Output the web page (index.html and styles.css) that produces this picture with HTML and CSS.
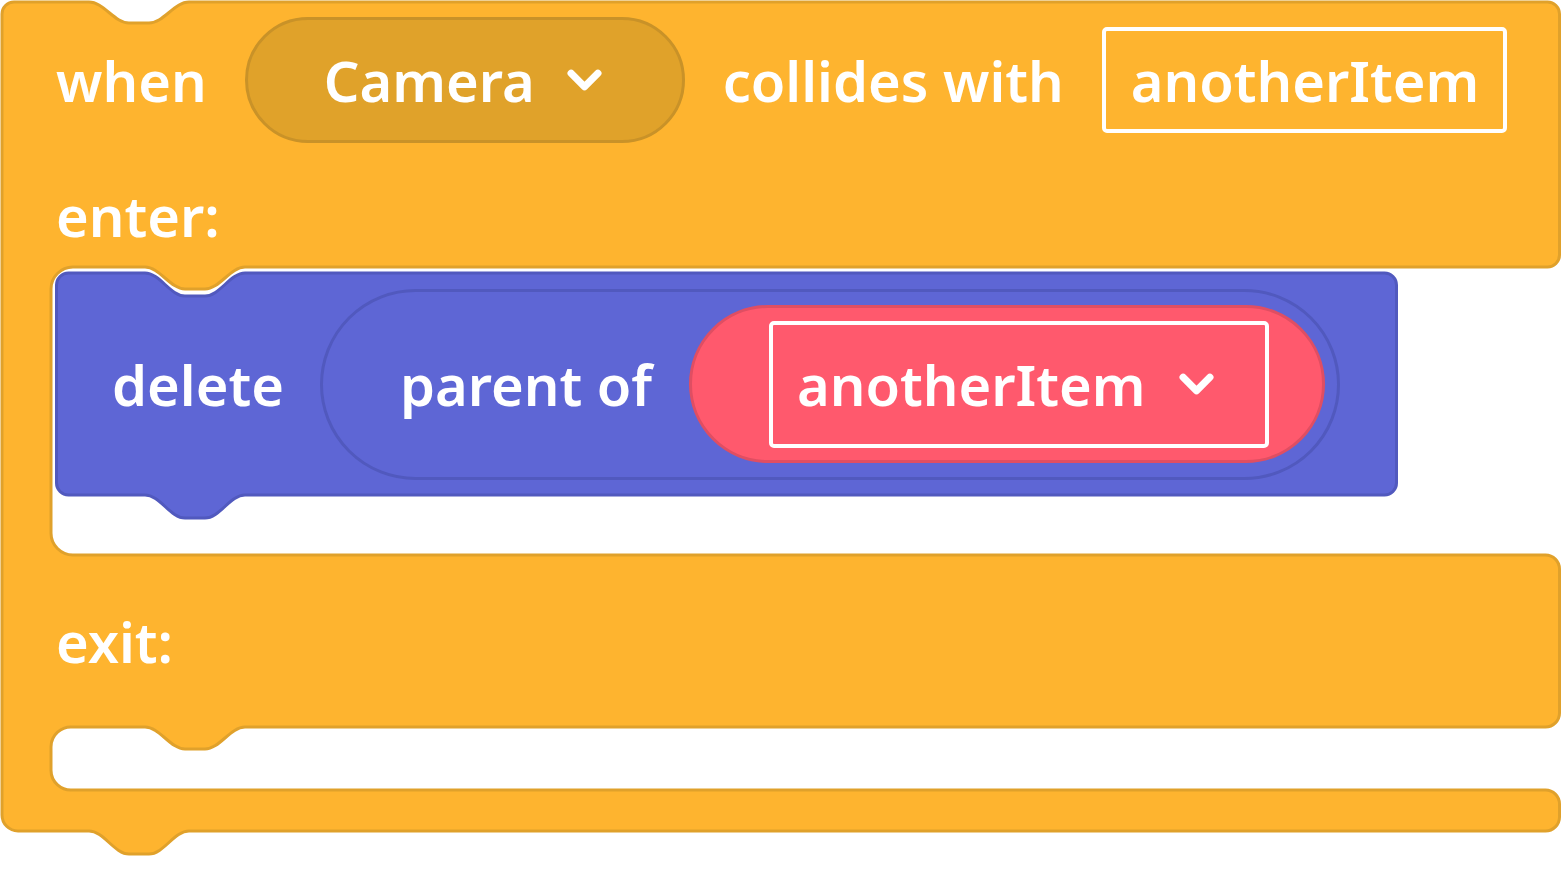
FILE: index.html
```html
<!DOCTYPE html>
<html lang="en">
<head>
    <meta charset="UTF-8">
    <meta name="viewport" content="width=device-width, initial-scale=1.0">
    <title>Collision event block</title>
    <link rel="stylesheet" href="styles.css">
</head>
<body>

    <div class="workspace">
        <!-- block outlines, drawn like the editor does -->
        <svg class="block-shapes" width="1563" height="889" viewBox="0 0 1563 889">
            <path class="shape-event" d="M 2,14 a 12,12 0 0 1 12,-12 H 89
                c 14.6,0 25.4,21 40,21 h 20 c 14.6,0 25.4,-21 40,-21
                H 1547.5 a 12,12 0 0 1 12,12 V 255 a 12,12 0 0 1 -12,12 H 245
                c -14.6,0 -25.4,22 -40,22 h -20 c -14.6,0 -25.4,-22 -40,-22
                H 73 a 22,22 0 0 0 -22,22 V 533 a 22,22 0 0 0 22,22 H 1545.5 a 14,14 0 0 1 14,14 V 713 a 14,14 0 0 1 -14,14 H 245
                c -14.6,0 -25.4,22 -40,22 h -20 c -14.6,0 -25.4,-22 -40,-22
                H 73 a 20,20 0 0 0 -22,20 V 770 a 20,20 0 0 0 22,20 H 1545.5 a 14,14 0 0 1 14,14 V 817 a 14,14 0 0 1 -14,14 H 189
                c -14.6,0 -25.4,23 -40,23 h -20 c -14.6,0 -25.4,-23 -40,-23
                H 18 a 16,16 0 0 1 -16,-16 Z"/>
            <path class="shape-delete" d="M 56.5,285 a 12,12 0 0 1 12,-12 H 145
                c 14.6,0 25.4,23 40,23 h 20 c 14.6,0 25.4,-23 40,-23
                H 1384.5 a 12,12 0 0 1 12,12 V 483 a 12,12 0 0 1 -12,12 H 245
                c -14.6,0 -25.4,23 -40,23 h -20 c -14.6,0 -25.4,-23 -40,-23
                H 68.5 a 12,12 0 0 1 -12,-12 Z"/>
        </svg>

        <div class="block-content">
            <div class="row row-when">
                <span class="label">when</span>
                <div class="dropdown dropdown-camera">
                    <span>Camera</span>
                    <svg class="chevron" viewBox="0 0 34 22"><polyline points="4,4 17,17 30,4"/></svg>
                </div>
                <span class="label">collides with</span>
                <div class="text-field">anotherItem</div>
            </div>

            <div class="section section-enter"><span class="label">enter:</span></div>

            <div class="slot">
                <div class="row row-delete">
                    <span class="label">delete</span>
                    <div class="reporter reporter-parent">
                        <span class="label">parent of</span>
                        <div class="reporter reporter-item">
                            <div class="text-field field-dropdown">
                                <span>anotherItem</span>
                                <svg class="chevron" viewBox="0 0 34 22"><polyline points="4,4 17,17 30,4"/></svg>
                            </div>
                        </div>
                    </div>
                </div>
            </div>

            <div class="section section-exit"><span class="label">exit:</span></div>
        </div>
    </div>

</body>
</html>
```

FILE: styles.css
```css
body {
    margin: 0;
    padding: 0;
    background-color: #ffffff;
    overflow: hidden;
}

.workspace {
    position: relative;
    width: 1563px;
    height: 889px;
}

.block-shapes {
    position: absolute;
    top: 0;
    left: 0;
}

.shape-event {
    fill: #feb42f;
    stroke: #e0a12b;
    stroke-width: 3;
}

.shape-delete {
    fill: #5e66d5;
    stroke: #5159be;
    stroke-width: 3;
}

.block-content {
    position: relative;
    padding-top: 17px;
    font-family: "Noto Sans", "Open Sans", sans-serif;
    font-weight: 600;
    font-size: 56px;
    line-height: 1;
    color: #ffffff;
    white-space: nowrap;
}

.row {
    display: flex;
    align-items: center;
}

.row-when {
    height: 126px;
    padding-left: 56px;
    gap: 38px;
}

.dropdown-camera {
    box-sizing: border-box;
    display: flex;
    align-items: center;
    gap: 32px;
    width: 440px;
    height: 126px;
    padding-left: 76px;
    background-color: #e0a22a;
    border: 3px solid #c99228;
    border-radius: 63px;
}

.chevron {
    width: 35px;
    height: 23px;
    fill: none;
    stroke: #ffffff;
    stroke-width: 7;
    stroke-linecap: round;
    stroke-linejoin: round;
}

.text-field {
    box-sizing: border-box;
    display: flex;
    align-items: center;
    width: 405px;
    height: 106px;
    padding-left: 25px;
    border: 4px solid #ffffff;
    border-radius: 5px;
}

.section {
    box-sizing: border-box;
    padding-left: 56px;
}

.section-enter {
    height: 125px;
    padding-top: 44px;
}

.slot {
    box-sizing: border-box;
    height: 287px;
    padding-top: 5px;
}

.row-delete {
    height: 222px;
    padding-left: 112px;
    gap: 36px;
}

.reporter {
    box-sizing: border-box;
    display: flex;
    align-items: center;
}

.reporter-parent {
    width: 1020px;
    height: 191px;
    padding-left: 77px;
    gap: 37px;
    border: 3px solid #5159be;
    border-radius: 96px;
}

.reporter-item {
    width: 636px;
    height: 158px;
    padding-left: 77px;
    background-color: #ff596d;
    border: 3px solid #e04e62;
    border-radius: 79px;
}

.field-dropdown {
    width: 500px;
    height: 127px;
    padding-left: 24px;
    gap: 33px;
}

.section-exit {
    display: flex;
    align-items: center;
    height: 172px;
}
```
